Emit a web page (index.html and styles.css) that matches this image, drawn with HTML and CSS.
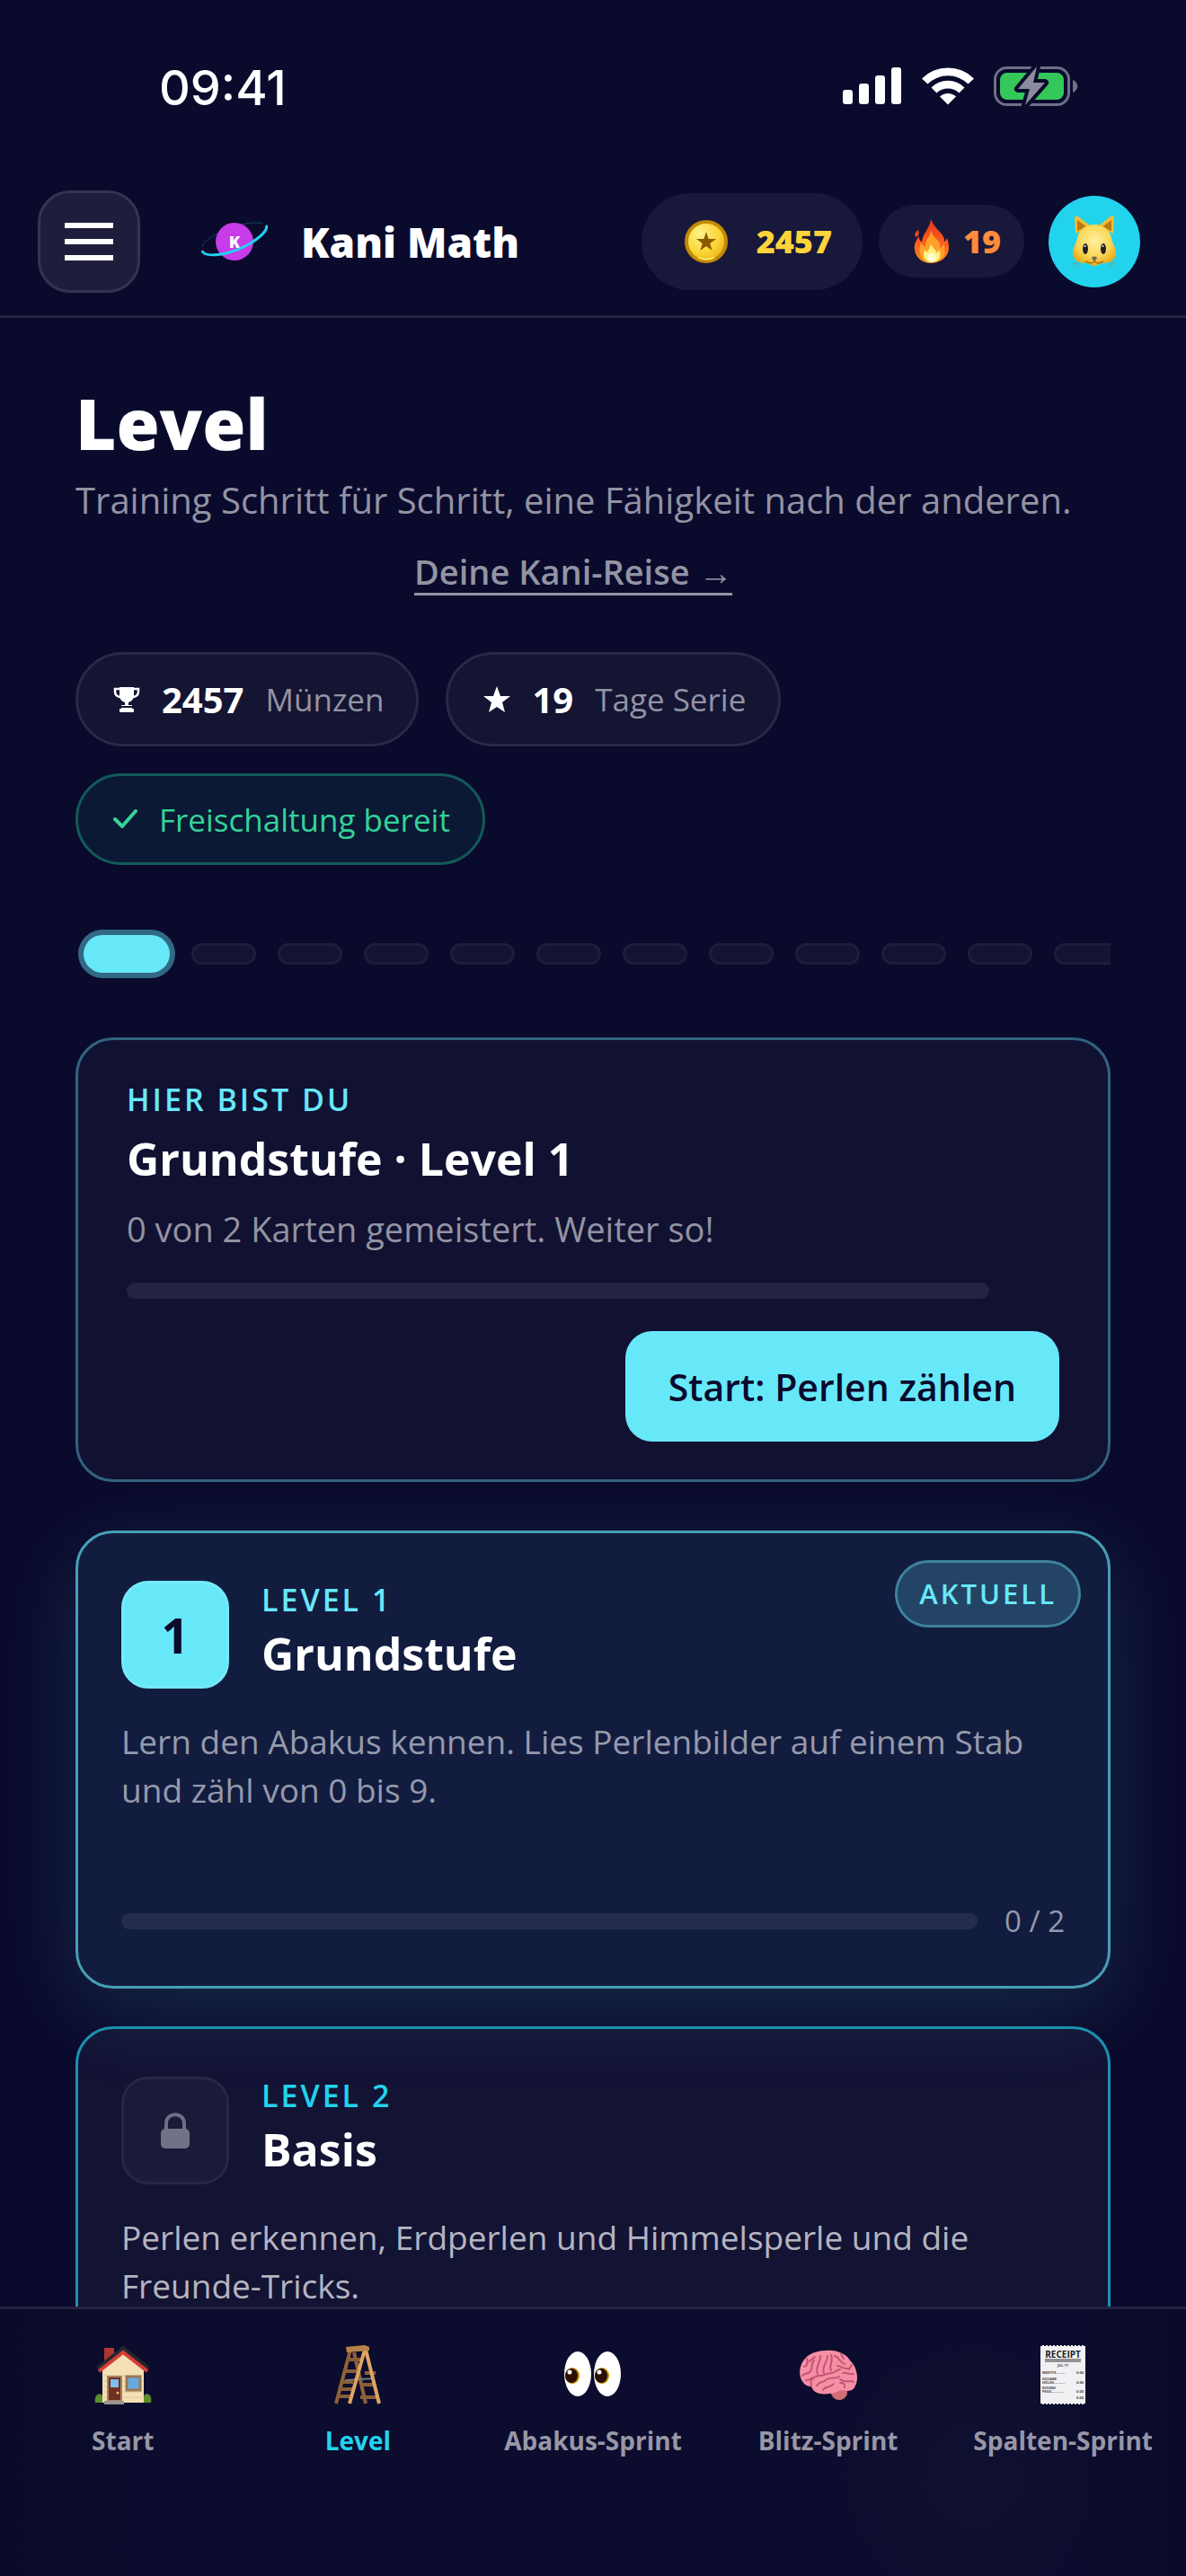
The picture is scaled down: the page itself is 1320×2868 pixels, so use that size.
FILE: index.html
```html
<!DOCTYPE html>
<html lang="de">
<head>
<meta charset="utf-8">
<title>Kani Math</title>
<meta name="viewport" content="width=device-width, initial-scale=1">
<link rel="stylesheet" href="styles.css">
</head>
<body>
<div class="app">

<div class="status">
  <span class="time">09:41</span>
  <span class="status-icons">
    <svg width="66" height="44" viewBox="0 0 66 44" fill="#fff">
      <rect x="0" y="27" width="11" height="16" rx="3"/>
      <rect x="18" y="20" width="11" height="23" rx="3"/>
      <rect x="36" y="11" width="11" height="32" rx="3"/>
      <rect x="54" y="2" width="11" height="41" rx="3"/>
    </svg>
    <svg width="58" height="44" viewBox="0 0 58 44" fill="#fff">
      <path d="M0 14.500A41 41 0 0 1 58 14.500L51.500 20.500A32 32 0 0 0 6.500 20.500Z"/>
      <path d="M10.500 24.500A26 26 0 0 1 47.500 24.500L41.500 30.500A18 18 0 0 0 16.500 30.500Z"/>
      <path d="M20 34.500A13 13 0 0 1 38 34.500L29 43.500Z"/>
    </svg>
    <svg width="94" height="46" viewBox="0 0 94 46">
      <rect x="1.500" y="2.500" width="82" height="41" rx="13" fill="none" stroke="#6f6f86" stroke-width="3"/>
      <rect x="7" y="8" width="71" height="30" rx="8" fill="#34c759"/>
      <path d="M88 16c7 3 7 11 0 14z" fill="#6f6f86"/>
      <path d="M48 1 27 26h13l-5 18 22-25H44z" fill="#8b8ba0" stroke="#0a0a2c" stroke-width="8" stroke-linejoin="round" paint-order="stroke"/>
    </svg>
  </span>
</div>

<header class="topbar">
  <button class="menu" type="button" aria-label="Menü"><i></i><i></i><i></i></button>
  <a class="brand" href="#">
    <svg width="76" height="56" viewBox="0 0 76 56">
      <path d="M2 34C2 24 48 2 70 8" fill="none" stroke="#17456b" stroke-width="1"/>
      <circle cx="38" cy="28" r="21" fill="#c73be8"/>
      <text class="logo-k" x="38" y="35" text-anchor="middle">K</text>
      <path d="M2 38C4 46 30 44 52 32C68 23 76 14 73 10" fill="none" stroke="#22d3ee" stroke-width="3"/>
    </svg>
    <span>Kani Math</span>
  </a>
  <div class="wallet">
    <span class="coins">
      <svg width="48" height="48" viewBox="0 0 48 48">
        <defs><radialGradient id="gold" cx=".35" cy=".3" r=".8"><stop offset="0" stop-color="#fff08a"/><stop offset=".6" stop-color="#fcd535"/><stop offset="1" stop-color="#e5ac16"/></radialGradient></defs>
        <circle cx="24" cy="24" r="22" fill="url(#gold)" stroke="#c28a06" stroke-width="4"/>
        <path d="M15 41.500a20 20 0 0 0 18 0" fill="none" stroke="#ffe35c" stroke-width="2"/>
        <path d="m24 13 2.600 8H35l-6.800 5 2.500 8-6.700-5-6.700 5 2.500-8-6.800-5h8.400z" fill="#8a5a00"/>
      </svg>
      <b>2457</b>
    </span>
    <span class="streak">
      <svg width="40" height="50" viewBox="0 0 40 50">
        <defs><linearGradient id="fire" x1="0" y1="0" x2="0" y2="1"><stop offset="0" stop-color="#e5341d"/><stop offset=".5" stop-color="#fb5a1d"/><stop offset="1" stop-color="#fb8a1d"/></linearGradient></defs>
        <path d="M19 0c-1 10-9 16-10 25C6 24 6 21 6 19 2 24 0 29 1 34c1 9 9 15 18 15s20-6 20-17c0-5-1-8-2-11-1 2-2 4-3 4C35 16 24 13 19 0z" fill="url(#fire)"/>
        <path d="M5 12c-4 3-5 6-2 8 3-2 3-5 2-8z" fill="#ef4523"/>
        <path d="M19 12c0 8-7 10-6 19-3-1-4-3-5-5-4 12 1 22 12 22s18-8 13-20c-1 2-2 4-4 4 2-9-8-10-10-20z" fill="#ffa12b"/>
        <path d="M19 27c0 5-3 6-4 10l-3-3c-3 8 0 14 8 14s12-6 8-14l-3 4c0-5-5-6-6-11z" fill="#fff07c"/>
        <ellipse cx="20" cy="43" rx="5" ry="5" fill="#fffbd0"/>
      </svg>
      <b>19</b>
    </span>
  </div>
  <a class="avatar" href="#" aria-label="Profil">
    <svg width="50" height="72" viewBox="0 0 50 72">
      <defs><radialGradient id="cat" cx=".5" cy=".4" r=".6"><stop offset="0" stop-color="#fff0a0"/><stop offset=".6" stop-color="#fbd95a"/><stop offset="1" stop-color="#e9ac1c"/></radialGradient></defs>
      <path d="M4 27 3 9q1-3 4-1l14 11zM46 27l1-18q-1-3-4-1L29 19z" fill="#f3bd35"/>
      <path d="M6 24 6 12l11 8zM44 24V12l-11 8z" fill="#b97813"/>
      <path d="M25 17c11 0 17 6 19 15 1 6 5 10 5 17 0 8-8 11-14 11-4 0-6 3-10 3s-6-3-10-3C9 60 1 57 1 49c0-7 4-11 5-17C8 23 14 17 25 17z" fill="url(#cat)"/>
      <ellipse cx="15" cy="44" rx="3" ry="6" fill="#202124"/><ellipse cx="35" cy="44" rx="3" ry="6" fill="#202124"/>
      <circle cx="14.500" cy="41" r="1" fill="#fff"/><circle cx="34.500" cy="41" r="1" fill="#fff"/>
      <path d="M22 54c1-2 5-2 6 0l-3 5z" fill="#78645d"/>
      <path d="M15 58c5 3 8 2 10 0 2 2 5 3 10 0" fill="none" stroke="#a87518" stroke-width="1.500"/>
      <path d="M8 59 1 61M9 61l-6 4M42 59l7 2M41 61l6 4" stroke="#7d9d81" stroke-width="1"/>
    </svg>
  </a>
</header>

<main>
  <section class="hero">
    <h1>Level</h1>
    <p>Training Schritt für Schritt, eine Fähigkeit nach der anderen.</p>
    <a class="journey" href="#">Deine Kani-Reise →</a>
  </section>

  <div class="chips">
    <span class="chip">
      <svg width="30" height="30" viewBox="0 0 30 30" fill="#fff">
        <path d="M7 1h16v9c0 5-3 7-6 8v3h4v4H9v-4h4v-3c-3-1-6-3-6-8z"/>
        <path d="M8 3H2v3c0 4 3 6 7 6M22 3h6v3c0 4-3 6-7 6" fill="none" stroke="#fff" stroke-width="2.500"/>
        <rect x="7" y="25" width="16" height="4" rx="1"/><path d="M9 23h12" stroke="#141433" stroke-width="2"/>
      </svg>
      <b>2457</b> <span>Münzen</span>
    </span>
    <span class="chip">
      <svg width="30" height="30" viewBox="0 0 30 30" fill="#fff"><path d="m15 0 4 11h11l-9 7 3 11-9-6-9 6 3-11-9-7h11z"/></svg>
      <b>19</b> <span>Tage Serie</span>
    </span>
    <span class="chip ready">
      <svg width="27" height="24" viewBox="0 0 27 24"><path d="m2 12 8 8L25 3" fill="none" stroke="#34d399" stroke-width="4" stroke-linecap="round" stroke-linejoin="round"/></svg>
      Freischaltung bereit
    </span>
  </div>

  <div class="steps">
    <i class="on"></i><i></i><i></i><i></i><i></i><i></i><i></i><i></i><i></i><i></i><i></i><i></i>
  </div>

  <section class="card here">
    <div class="here-body">
      <p class="eyebrow">HIER BIST DU</p>
      <h2>Grundstufe · Level 1</h2>
      <p class="text">0 von 2 Karten gemeistert. Weiter so!</p>
      <div class="bar"></div>
    </div>
    <button class="start" type="button">Start: Perlen zählen</button>
  </section>

  <section class="card level current">
    <span class="badge">AKTUELL</span>
    <div class="head">
      <span class="num">1</span>
      <div>
        <p class="eyebrow">LEVEL 1</p>
        <h2>Grundstufe</h2>
      </div>
    </div>
    <p class="text">Lern den Abakus kennen. Lies Perlenbilder auf einem Stab und zähl von 0 bis 9.</p>
    <div class="progress"><div class="bar"></div><span>0 / 2</span></div>
  </section>

  <section class="card level next">
    <div class="head">
      <span class="num locked">
        <svg width="32" height="40" viewBox="0 0 32 40"><path d="M6 20v-8C6 -1 26 -1 26 12v8" fill="none" stroke="#6e6e84" stroke-width="4"/><rect y="18" width="32" height="22" rx="5" fill="#727287"/></svg>
      </span>
      <div>
        <p class="eyebrow">LEVEL 2</p>
        <h2>Basis</h2>
      </div>
    </div>
    <p class="text">Perlen erkennen, Erdperlen und Himmelsperle und die Freunde-Tricks.</p>
  </section>
</main>

<nav class="tabs">
  <a href="#">
    <svg width="64" height="66" viewBox="0 0 64 66">
      <path d="M11 3h11v20H11z" fill="#b0352f"/>
      <path d="M9 27 32 7l23 20v37H9z" fill="#f4dfb6"/>
      <path d="M10 34h44M10 40h44M10 46h44M10 52h44M10 58h44" stroke="#e2c998" stroke-width="1"/>
      <path d="M4 26 32 4l28 22" fill="none" stroke="#26272d" stroke-width="5"/>
      <path d="M5 29 32 8l27 21" fill="none" stroke="#d63c34" stroke-width="4"/>
      <rect x="15" y="35" width="15" height="27" fill="#6e3020" stroke="#a78262" stroke-width="2"/>
      <rect x="18" y="38" width="9" height="9" fill="#7fbdeb"/><circle cx="26" cy="53" r="1.500" fill="#f1bd3b"/>
      <rect x="36" y="35" width="15" height="15" fill="#68aade" stroke="#9a7857" stroke-width="3"/>
      <path d="M11 62h22v4H11z" fill="#9b9690"/>
      <path d="M1 64c-2-10 7-12 8-7v7zM63 64c2-10-6-12-8-7v7z" fill="#5c8d2c"/>
    </svg>
    <span>Start</span>
  </a>
  <a href="#" class="active">
    <svg width="64" height="66" viewBox="0 0 64 66">
      <path d="M24 5 8 65M28 8l13 57" stroke="#916238" stroke-width="4"/>
      <path d="M20 16h17M17 29h17M40 31h12M14 41h13M36 44h16M12 49h14M9 57h15M35 58h20" stroke="#895e36" stroke-width="4"/>
      <path d="m18 39 33-2" stroke="#777" stroke-width="2"/>
      <path d="M40 5 23 65M41 5l15 60" stroke="#dfa462" stroke-width="4"/>
      <path d="m19 2 21-2 5 2v4l-25 2z" fill="#b98249"/>
    </svg>
    <span>Level</span>
  </a>
  <a href="#">
    <svg width="64" height="66" viewBox="0 0 64 66">
      <ellipse cx="15" cy="32" rx="15" ry="25" fill="#fff"/><ellipse cx="48" cy="32" rx="15" ry="25" fill="#fff"/>
      <ellipse cx="9" cy="34" rx="8" ry="9" fill="#c28a00"/><ellipse cx="42" cy="34" rx="8" ry="9" fill="#c28a00"/>
      <ellipse cx="8" cy="34" rx="7" ry="8" fill="#2b1002"/><ellipse cx="41" cy="34" rx="7" ry="8" fill="#2b1002"/>
      <circle cx="6" cy="30" r="2.500" fill="#fff"/><circle cx="39" cy="30" r="2.500" fill="#fff"/>
    </svg>
    <span>Abakus-Sprint</span>
  </a>
  <a href="#">
    <svg width="66" height="66" viewBox="0 0 66 66">
      <path d="M34 48h18c5 5 0 13-7 13-7 0-9-6-11-13z" fill="#d06d76"/>
      <path d="M14 46C4 46-1 34 2 24 5 12 17 6 30 6c12-1 22 3 27 11 8 7 10 21 6 28-2 6-8 7-13 5-7 0-8 4-16 4-7 1-17 1-20-8z" fill="#f58fa5"/>
      <path d="M14 46c-2-7 2-11 8-12 6 1 8-3 14-3 4 0 5-3 10-4M20 45c3-5 8-3 11-7 5-3 10 0 14-3M4 34c3-4 7-1 9-5 3-4 0-8 4-12M8 39c4 1 5-3 9-3M21 32c-3-8 3-12 3-20M28 31c-3-7 4-11 4-19M36 28c-3-6 3-9 0-17M40 12c7 3 5 7 11 9M43 23c4 0 7 4 12 3M49 31c5-1 7 2 12 1M46 38c5 5 11 0 15 3M27 50c2-5 8-2 12-7M6 24c4-1 4-5 3-9M51 47c1-4-1-5-5-5M12 18l6-5M47 10l3 5M59 22l-3 5" fill="none" stroke="#c45572" stroke-width="2" stroke-linecap="round"/>
    </svg>
    <span>Blitz-Sprint</span>
  </a>
  <a href="#">
    <svg class="receipt" width="50" height="66" viewBox="0 0 50 66">
      <path d="M0 0h50v66H0z" fill="#f1f1f4"/>
      <path d="M0 .500h50M0 65.500h50" stroke="#0d0d2f" stroke-width="1" stroke-dasharray="2 2"/>
      <text class="r-title" x="25" y="14" text-anchor="middle">RECEIPT</text>
      <path d="M5 16h40M5 18h40" stroke="#333" stroke-width="1"/>
      <text x="25" y="24" text-anchor="middle">JUL 17</text>
      <text x="2" y="32">MISFITS.........</text><text x="48" y="32" text-anchor="end">0.00</text>
      <text x="2" y="39">SQUARE</text>
      <text x="2" y="43">HOLES...........</text><text x="48" y="43" text-anchor="end">0.00</text>
      <text x="2" y="49">ROUND</text>
      <text x="2" y="53">PEGS............</text><text x="48" y="53" text-anchor="end">0.00</text>
      <text x="48" y="60" text-anchor="end">0.00</text>
    </svg>
    <span>Spalten-Sprint</span>
  </a>
</nav>

</div>
</body>
</html>
```

FILE: styles.css
```css
* {
  box-sizing: border-box;
}
body, h1, h2, p {
  margin: 0;
}
body {
  background: #0a0a2c;
  color: #fff;
  font-family: "Open Sans", "Noto Sans", sans-serif;
}
a {
  color: inherit;
  text-decoration: none;
}
button {
  font-family: inherit;
}
svg {
  display: block;
  flex: none;
}
.app {
  display: flex;
  flex-direction: column;
  height: 100vh;
  overflow: hidden;
}

/* status bar */
.status {
  display: flex;
  flex: none;
  align-items: center;
  justify-content: space-between;
  height: 186px;
  padding: 6px 120px 0 177px;
}
.time {
  padding-top: 4px;
  font: 500 54px/60px Inter, sans-serif;
}
.status-icons {
  display: flex;
  gap: 22px;
}

/* header */
.topbar {
  display: flex;
  flex: none;
  align-items: center;
  height: 168px;
  padding: 0 51px 0 42px;
  border-bottom: 3px solid #222241;
}
.menu {
  display: flex;
  flex-direction: column;
  align-items: center;
  justify-content: center;
  gap: 12px;
  width: 114px;
  height: 114px;
  border: 3px solid #353450;
  border-radius: 36px;
  background: #1e1e3c;
}
.menu i {
  width: 54px;
  height: 6px;
  background: #fff;
}
.brand {
  display: flex;
  align-items: center;
  gap: 36px;
  margin-left: 67px;
  font-size: 46px;
  font-weight: 800;
  white-space: nowrap;
}
.logo-k {
  fill: #fff;
  font-size: 18px;
  font-weight: 800;
}
.wallet {
  display: flex;
  align-items: center;
  gap: 18px;
  margin-left: auto;
  font-size: 36px;
}
.wallet b {
  font-weight: 800;
}
.coins, .streak {
  display: flex;
  align-items: center;
  border-radius: 54px;
  background: #18183a;
}
.coins {
  justify-content: space-between;
  width: 246px;
  height: 108px;
  padding: 0 34px 0 48px;
  color: #ffd43b;
}
.streak {
  gap: 15px;
  width: 162px;
  height: 81px;
  padding-left: 39px;
  color: #ff8b3d;
}
.avatar {
  display: flex;
  align-items: center;
  justify-content: center;
  width: 102px;
  height: 102px;
  margin-left: 27px;
  border-radius: 50%;
  background: #22d3ee;
}

/* content */
main {
  flex: 1;
  min-height: 0;
  overflow: hidden;
  padding: 69px 84px 0;
}
.hero {
  display: flex;
  flex-direction: column;
  width: fit-content;
}
h1 {
  font-size: 78px;
  font-weight: 800;
  line-height: 96px;
}
.hero p {
  margin-top: 8px;
  color: #9393a3;
  font-size: 40px;
  line-height: 60px;
}
.journey {
  align-self: center;
  margin-top: 25px;
  border-bottom: 3px solid #9393a3;
  color: #9393a3;
  font-size: 38px;
  font-weight: 600;
  line-height: 48px;
}
.chips {
  display: flex;
  flex-wrap: wrap;
  gap: 30px;
  margin-top: 63px;
}
.chip {
  display: flex;
  align-items: center;
  gap: 24px;
  height: 105px;
  padding: 0 36px 0 39px;
  border: 3px solid #292947;
  border-radius: 54px;
  background: #141433;
  font-size: 35px;
}
.chip b {
  font-size: 40px;
}
.chip span {
  color: #9393a3;
}
.ready {
  height: 102px;
  border-color: #125b59;
  background: #0b1934;
  color: #34d399;
}
.steps {
  display: flex;
  align-items: center;
  gap: 24px;
  overflow: hidden;
  margin-top: 66px;
  padding: 12px 9px;
}
.steps i {
  flex: none;
  width: 72px;
  height: 24px;
  border: 3px solid #1d1d3b;
  border-radius: 12px;
  background: #131332;
}
.steps .on {
  width: 96px;
  height: 42px;
  border: 0;
  border-radius: 21px;
  background: #67e8f9;
  box-shadow: 0 0 0 6px #316985;
}

/* cards */
.card {
  position: relative;
  border: 3px solid #316480;
  border-radius: 42px;
  background: rgba(255, 255, 255, .03);
}
.eyebrow {
  color: #67e8f9;
  font-size: 34px;
  font-weight: 600;
  letter-spacing: 3px;
  line-height: 42px;
}
h2 {
  font-size: 50px;
  font-weight: 700;
  line-height: 66px;
}
.text {
  color: #9393a3;
  font-size: 37px;
  line-height: 54px;
}
.bar {
  height: 18px;
  border-radius: 9px;
  background: rgba(255, 255, 255, .08);
}
.here {
  display: flex;
  flex-direction: column;
  margin-top: 60px;
  padding: 45px 54px 42px;
}
.here-body {
  max-width: 960px;
}
.here h2 {
  margin-top: 12px;
}
.here .text {
  margin-top: 18px;
  font-size: 38px;
}
.here .bar {
  margin-top: 33px;
}
.start {
  align-self: flex-end;
  height: 123px;
  margin-top: 36px;
  padding: 0 48px;
  border: 0;
  border-radius: 30px;
  background: #67e8f9;
  color: #0a0a2c;
  font-size: 41px;
  font-weight: 600;
}
.level {
  margin-top: 42px;
  padding: 53px 48px 51px;
}
.current {
  margin-top: 54px;
  border-color: #459fb5;
  background: #121c3f;
  box-shadow: 0 24px 96px rgba(103, 232, 249, .14);
}
.current .text {
  color: #959aac;
}
.next {
  border-color: #1c91af;
  background: rgba(255, 255, 255, .04);
}
.next .eyebrow {
  color: #22d3ee;
}
.next .text {
  color: #b5b5c1;
}
.badge {
  position: absolute;
  top: 30px;
  right: 30px;
  height: 75px;
  padding: 0 24px;
  border: 3px solid #3c829b;
  border-radius: 38px;
  background: #244465;
  color: #67e8f9;
  font-size: 31px;
  font-weight: 600;
  letter-spacing: 3px;
  line-height: 69px;
}
.head {
  display: flex;
  gap: 36px;
}
.head h2 {
  margin-top: 6px;
}
.num {
  display: flex;
  align-items: center;
  justify-content: center;
  width: 120px;
  height: 120px;
  border: 3px solid #75eafa;
  border-radius: 30px;
  background: #67e8f9;
  color: #0a0a2c;
  font-size: 54px;
  font-weight: 700;
  line-height: 66px;
}
.locked {
  border-color: #272745;
  background: #1a1a39;
}
.level .text {
  margin-top: 32px;
}
.progress {
  display: flex;
  align-items: center;
  gap: 30px;
  margin-top: 98px;
  color: #959aac;
  font-size: 33px;
  line-height: 42px;
}
.progress .bar {
  flex: 1;
}

/* bottom tabs */
.tabs {
  display: grid;
  flex: none;
  grid-template-columns: repeat(5, 1fr);
  height: 300px;
  padding: 40px 6px 0;
  border-top: 3px solid #222241;
  background: radial-gradient(circle at 82% 62%, #101031, rgba(16, 16, 49, 0) 160px), linear-gradient(90deg, #0a0a2a, #0c0c2e 12%, #0c0c2e 90%, #0a0a2a);
}
.tabs a {
  display: flex;
  flex-direction: column;
  align-items: center;
  gap: 19px;
  color: #9797a6;
  font-size: 28px;
  font-weight: 700;
  line-height: 42px;
  white-space: nowrap;
}
.tabs .active {
  color: #22d3ee;
}
.receipt text {
  fill: #444;
  font-size: 4px;
}
.receipt .r-title {
  fill: #222;
  font-size: 10px;
}
```
